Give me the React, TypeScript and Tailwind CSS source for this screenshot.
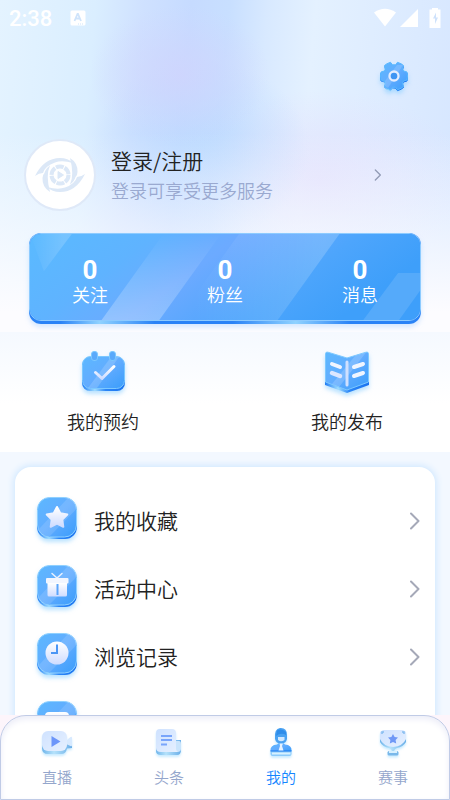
import type { ReactNode } from 'react';

function Defs() {
  return (
    <svg className="absolute h-0 w-0" aria-hidden="true">
      <defs>
        <linearGradient id="blue" x1="0" y1="0" x2="1" y2="1">
          <stop offset="0" stopColor="#5cb8ff" />
          <stop offset="0.5" stopColor="#62acff" />
          <stop offset="1" stopColor="#3a9dfb" />
        </linearGradient>
        <linearGradient id="edge" x1="0" y1="0" x2="1" y2="0">
          <stop offset="0" stopColor="#1f7cf5" />
          <stop offset="0.3" stopColor="#9fdcff" />
          <stop offset="0.55" stopColor="#2b86f7" />
          <stop offset="1" stopColor="#1a73f0" />
        </linearGradient>
        <linearGradient id="white" x1="0" y1="0" x2="0" y2="1">
          <stop offset="0" stopColor="#ffffff" />
          <stop offset="1" stopColor="#cfdcff" />
        </linearGradient>
        <linearGradient id="pale" x1="0" y1="0" x2="1" y2="1">
          <stop offset="0" stopColor="#cfe2ff" />
          <stop offset="1" stopColor="#e6f0ff" />
        </linearGradient>
        <linearGradient id="paleEdge" x1="0" y1="0" x2="1" y2="0">
          <stop offset="0" stopColor="#6fb4ea" />
          <stop offset="0.4" stopColor="#b5e2fb" />
          <stop offset="1" stopColor="#6aaee8" />
        </linearGradient>
        <linearGradient id="shineDown" x1="0" y1="0" x2="0" y2="1">
          <stop offset="0" stopColor="#fff" stopOpacity="0" />
          <stop offset="1" stopColor="#fff" stopOpacity="0.28" />
        </linearGradient>
        <linearGradient id="shineUp" x1="0" y1="0" x2="1" y2="0">
          <stop offset="0.1" stopColor="#fff" stopOpacity="0" />
          <stop offset="0.9" stopColor="#fff" stopOpacity="0.18" />
        </linearGradient>
        <linearGradient id="shineRight" x1="0" y1="0" x2="1" y2="0">
          <stop offset="0" stopColor="#fff" stopOpacity="0" />
          <stop offset="0.8" stopColor="#fff" stopOpacity="0.16" />
        </linearGradient>
        <linearGradient id="cardFill" x1="0" y1="0" x2="1" y2="0.3">
          <stop offset="0" stopColor="#5abaff" />
          <stop offset="0.3" stopColor="#5fb3ff" />
          <stop offset="0.5" stopColor="#6caaff" />
          <stop offset="0.78" stopColor="#4da5fc" />
          <stop offset="1" stopColor="#3e9ffa" />
        </linearGradient>
      </defs>
    </svg>
  );
}

function Tile({ children }: { children?: ReactNode }) {
  return (
    <svg className="h-12 w-12 overflow-visible drop-shadow-[0_3px_2px_rgba(120,200,255,0.5)]" viewBox="0 2 48 48" aria-hidden="true">
      <rect x="4" y="5" width="40" height="39" rx="12" fill="url(#edge)" />
      <rect x="4.500" y="2.500" width="39" height="39.500" rx="12" fill="url(#blue)" stroke="#8fd0ff" />
      <path d="M35 3 Q43 5 43.500 14 L17 41 H14 Q7 40 6 34 Z" fill="#fff" opacity=".12" />
      {children}
    </svg>
  );
}

function StarIcon() {
  return (
    <Tile>
      <path d="M24 12 L27.300 18.300 L34.300 19.500 L29.300 24.600 L30.300 31.800 L24 28.700 L17.700 31.800 L18.700 24.600 L13.700 19.500 L20.700 18.300 Z" fill="url(#white)" stroke="url(#white)" strokeWidth="2" strokeLinejoin="round" />
    </Tile>
  );
}

function GiftIcon() {
  return (
    <Tile>
      <path d="M19 10.500 L24 15 L29 10.500" fill="none" stroke="#e9f1ff" strokeWidth="1.500" strokeLinecap="round" />
      <rect x="13" y="15" width="22.500" height="5.500" rx="1" fill="#f2f6ff" />
      <path d="M14.500 20 H34 V32 Q34 33.500 32.500 33.500 H16 Q14.500 33.500 14.500 32 Z" fill="url(#white)" />
      <path d="M24.500 21 V32" stroke="#5aa5fb" strokeWidth="2" />
    </Tile>
  );
}

function ClockIcon() {
  return (
    <Tile>
      <circle cx="24" cy="22" r="11.500" fill="url(#white)" />
      <path d="M24 13.500 V22 H18" fill="none" stroke="#4b96f5" strokeWidth="2" />
    </Tile>
  );
}

function MessageIcon() {
  return (
    <Tile>
      <rect x="12" y="13" width="24" height="18" rx="4" fill="url(#white)" />
    </Tile>
  );
}

function GearIcon() {
  const gear =
    'M13 -4 L13.500 0 L13 4 L9.500 5 L8.500 7 L9.500 10.500 L7 12.300 L3.500 13.700 L1.500 11.200 H-1.500 L-3.500 13.700 L-7 12.300 L-9.500 10.500 L-8.500 7 L-9.500 5 L-13 4 L-13.500 0 L-13 -4 L-9.500 -5 L-8.500 -7 L-9.500 -10.500 L-7 -12.300 L-3.500 -13.700 L-1.500 -11.200 H1.500 L3.500 -13.700 L7 -12.300 L9.500 -10.500 L8.500 -7 L9.500 -5 Z';
  return (
    <svg className="h-9 w-9 drop-shadow-[0_3px_2px_rgba(120,200,255,0.5)]" viewBox="-18 -18 36 36" strokeLinejoin="round" aria-hidden="true">
      <path d={gear} fill="url(#edge)" stroke="url(#edge)" transform="translate(0 1)" />
      <path d={gear} fill="url(#blue)" stroke="#5ab8ff" />
      <path d="M3 -11 L9 -11 L-6 12 L-9 10 V5 Z" fill="#fff" opacity=".14" />
      <circle r="4.500" fill="#3f95f3" stroke="#e3edff" strokeWidth="2.300" />
    </svg>
  );
}

function CalendarIcon() {
  return (
    <svg className="h-12 w-12 overflow-visible drop-shadow-[0_3px_2px_rgba(120,200,255,0.5)]" viewBox="0 0 48 48" aria-hidden="true">
      <rect x="3" y="10" width="43" height="33" rx="8" fill="url(#edge)" />
      <rect x="3.500" y="8.500" width="42" height="32" rx="8" fill="url(#blue)" stroke="#7cc8ff" />
      <path d="M32 9 H40 L18 40 H9 Z" fill="#fff" opacity=".16" />
      <rect x="12.500" y="3.500" width="6" height="9" rx="2.500" fill="#5aa9fb" stroke="#7cc8ff" />
      <rect x="30.500" y="3.500" width="6" height="9" rx="2.500" fill="#5aa9fb" stroke="#7cc8ff" />
      <path d="M16.500 24.500 L23 30.500 L35 18.500" fill="none" stroke="url(#white)" strokeWidth="3" strokeLinecap="round" strokeLinejoin="round" />
    </svg>
  );
}

function BookIcon() {
  return (
    <svg className="h-12 w-12 overflow-visible drop-shadow-[0_3px_2px_rgba(120,200,255,0.5)]" viewBox="0 0 48 48" aria-hidden="true">
      <path d="M2 7 L24 13 L46 7 V37 L24 45 L2 37 Z" fill="url(#edge)" />
      <path d="M2.500 5.500 Q3 3.500 5 4.200 L24 10 L43 4.200 Q45 3.500 45.500 5.500 V34 L24 42 L2.500 34 Z" fill="url(#blue)" stroke="#7cc8ff" />
      <path d="M32 8 L43 4.500 L16 39 L9 36 Z" fill="#fff" opacity=".16" />
      <path d="M24 14 V37" stroke="#cfe0ff" strokeWidth="3" strokeLinecap="round" />
      <path d="M9 16 L17 19" stroke="#f0f5ff" strokeWidth="4" strokeLinecap="round" />
      <path d="M9 25 L17 28" stroke="#dce6ff" strokeWidth="4.500" strokeLinecap="round" />
      <path d="M31 19 L40 16 M31 28 L40 25" stroke="#f0f5ff" strokeWidth="4" strokeLinecap="round" />
    </svg>
  );
}

function LiveIcon() {
  return (
    <svg className="h-9 w-9 drop-shadow-[0_2px_1px_rgba(150,215,255,0.5)]" viewBox="0 0 36 36" aria-hidden="true">
      <path d="M3 13 V22 Q3 28 9 28 H22 Q27 28 28 22.500 L33 22 V15 L28 14 Z" fill="url(#paleEdge)" />
      <path d="M28 14 L31.500 11 Q33 10 33 12 V19 Q33 21 31.500 20 L27 18 Z" fill="#d8eaff" />
      <rect x="3" y="5" width="25" height="20" rx="6" fill="url(#pale)" />
      <path d="M12.500 10 L21.500 15.500 L12.500 21 Z" fill="#6c96fa" />
    </svg>
  );
}

function NewsIcon() {
  return (
    <svg className="h-9 w-9 drop-shadow-[0_2px_1px_rgba(150,215,255,0.5)]" viewBox="0 0 36 36" aria-hidden="true">
      <path d="M5 14 H30 V24 Q30 29 26 29 H10 Q5 29 5 25 Z" fill="url(#paleEdge)" />
      <path d="M24 15 H28 Q30 15 30 18 V23 Q30 26 26 26 H20 Z" fill="#c9e4fc" />
      <path d="M9 3 H21 Q25 3 25 7 V22 Q25 26 28 26 H10 Q5 26 5 22 V7 Q5 3 9 3 Z" fill="url(#pale)" />
      <path d="M10 10 H21 M10 14 H21 M10 18.500 H16" stroke="#79a5fb" strokeWidth="2" />
    </svg>
  );
}

function MineIcon() {
  return (
    <svg className="h-9 w-9 drop-shadow-[0_2px_1px_rgba(150,215,255,0.5)]" viewBox="0 0 36 36" aria-hidden="true">
      <rect x="7.500" y="23" width="21" height="7" rx="2" fill="#8ccbfb" />
      <path d="M7.500 25 Q7 19 14 18.500 L16 17 H20 L22 18.500 Q29 19 28.500 25 Z" fill="url(#blue)" />
      <path d="M9 27.500 H27.500" stroke="#d7f1ff" strokeWidth="2" />
      <path d="M7.500 25 H28.500" stroke="#1978ee" />
      <path d="M12 13 Q11 2.500 17 2 Q24 1.500 24 9 V13 Q23 17.500 18 17.500 Q13 17.500 12 13 Z" fill="#4aa2f2" />
      <path d="M14 4.500 Q18 2 23 6 V9 Q18 6 13 10 Z" fill="#2f8dea" />
      <path d="M15 11 H21.500 V14 Q18 16.500 15 14 Z" fill="#cfe7ff" />
      <path d="M16.500 17.500 H20 L19 20 L20.500 24.500 H15.500 L17 20 Z" fill="#e6f2ff" />
    </svg>
  );
}

function TrophyIcon() {
  return (
    <svg className="h-9 w-9 drop-shadow-[0_2px_1px_rgba(150,215,255,0.5)]" viewBox="0 0 36 36" aria-hidden="true">
      <path d="M5 9 V16 Q8 21 14 22 Q17 23 17 26 H19 Q19 23 22 22 Q28 21 31 16 V9 Z" fill="url(#paleEdge)" />
      <path d="M8 4 H28 L31 6 V13 Q28 20 18 21 Q8 20 5 13 V6 Z" fill="url(#pale)" />
      <rect x="12.500" y="25" width="11" height="4.500" rx="1.500" fill="#79b8ea" />
      <path d="M14 26 H22" stroke="#d7f0ff" strokeWidth="2" />
      <path d="M18 8 L19.600 11 L23 11.600 L20.600 14 L21.200 17.500 L18 15.900 L14.800 17.500 L15.400 14 L13 11.600 L16.400 11 Z" fill="#6f98f6" />
      <path d="M7 8 V6 H9 M29 8 V6 H27" fill="none" stroke="#86bdf0" strokeWidth="1.500" />
    </svg>
  );
}

function AvatarLogo() {
  const swoosh =
    'M3 25 Q12 7 28 7 Q36 7 41 12 Q30 9 23 11.500 Q13 15 11 22 Q7 22 3 25 Z M12.500 22 Q14 17 18 14.500 Q13.500 24 18 41 Q10 36 10.500 27 Q10.500 24 12.500 22 Z';
  return (
    <svg className="h-12 w-14" viewBox="0 0 56 48" fill="#dce8f7" aria-hidden="true">
      <path d={swoosh} />
      <path d={swoosh} transform="rotate(180 28 24)" />
      <circle cx="28" cy="24" r="8.500" fill="none" stroke="#dce8f7" strokeWidth="4" strokeDasharray="7.900 1" />
      <path d="M26 20.500 L31.500 24 L26 27.500 Z" stroke="#dce8f7" strokeLinejoin="round" />
    </svg>
  );
}

function CardShine() {
  return (
    <svg className="absolute inset-0 h-full w-full" viewBox="0 0 392 88" preserveAspectRatio="none" aria-hidden="true">
      <rect width="392" height="88" fill="url(#cardFill)" />
      <path d="M0 0 H42 L14 38 Z" fill="url(#shineRight)" />
      <path d="M134 0 H192 L130 88 H72 Z" fill="url(#shineDown)" />
      <path d="M210 0 H311 L249 88 H148 Z" fill="url(#shineUp)" />
      <path d="M370 40 H392 V58 L371 88 H335 Z" fill="#fff" opacity=".12" />
    </svg>
  );
}

function Chevron({ className }: { className: string }) {
  return (
    <svg className={className} viewBox="0 0 10 18" fill="none" stroke="currentColor" strokeWidth="2" strokeLinecap="round" strokeLinejoin="round" aria-hidden="true">
      <path d="M1 1.500 L8.500 9 L1 16.500" />
    </svg>
  );
}

const stats = [
  { label: '关注', value: 0 },
  { label: '粉丝', value: 0 },
  { label: '消息', value: 0 },
];

const menu = [
  { label: '我的收藏', icon: <StarIcon /> },
  { label: '活动中心', icon: <GiftIcon /> },
  { label: '浏览记录', icon: <ClockIcon /> },
  { label: '意见反馈', icon: <MessageIcon /> },
];

const tabs = [
  { label: '直播', icon: <LiveIcon /> },
  { label: '头条', icon: <NewsIcon /> },
  { label: '我的', icon: <MineIcon />, active: true },
  { label: '赛事', icon: <TrophyIcon /> },
];

export default function App() {
  return (
    <div className="flex h-screen flex-col overflow-hidden bg-[#f3f8ff] font-['Noto_Sans_CJK_SC',sans-serif] font-[350] text-[#222]">
      <Defs />
      <main className="min-h-0 flex-1 overflow-hidden">
        <header className="bg-[linear-gradient(180deg,rgba(252,252,255,0)_40%,rgba(252,252,255,0.45)_65%,#fcfcff_94%),radial-gradient(ellipse_90px_70px_at_180px_75px,rgba(208,212,253,0.8)_0%,rgba(208,212,253,0)_100%),radial-gradient(ellipse_110px_90px_at_200px_150px,rgba(186,218,255,0.8)_0%,rgba(186,218,255,0)_100%),radial-gradient(ellipse_150px_90px_at_320px_180px,rgba(226,224,253,0.9)_0%,rgba(226,224,253,0)_100%),linear-gradient(95deg,#e4f3ff_0%,#daeeff_20%,#cfe1ff_30%,#c6dbff_40%,#c8dfff_48%,#d8e9ff_56%,#e4f1ff_66%,#d6e6ff_100%)]">
          <div className="flex h-9 items-center px-[9px] text-white">
            <span className="font-[Roboto] text-[22px] font-medium">2:38</span>
            <svg className="ml-[18px] h-4 w-4" viewBox="0 0 16 16" aria-hidden="true">
              <rect x="0.500" y="0.500" width="15" height="15" rx="1.500" fill="#fff" />
              <path d="M4.500 11 L7.500 4 H8 L11 11 M5.500 8.500 H10" fill="none" stroke="#cfe4fb" strokeWidth="1.800" />
              <path d="M8 14 H14" stroke="#cfe4fb" strokeDasharray="1 1" />
            </svg>
            <svg className="ml-auto h-5 w-6" viewBox="0 0 24 20" fill="#fff" aria-hidden="true">
              <path d="M1 4.500 Q12 -3 23 4.500 L12 18.500 Z" />
            </svg>
            <svg className="ml-[3px] h-5 w-5" viewBox="0 0 20 20" fill="#fff" aria-hidden="true">
              <path d="M18 1 V19 H0 Z" />
            </svg>
            <svg className="ml-[9px] h-5 w-3" viewBox="0 0 12 20" aria-hidden="true">
              <path d="M3 0 H9 V1.500 H11.500 V20 H0.500 V1.500 H3 Z" fill="#fff" />
              <path d="M7 4.500 L4 10.500 H6 V16 L9 9.500 H7 Z" fill="#cfe2fb" />
            </svg>
          </div>

          <div className="flex justify-end px-[38px] pt-[22px]">
            <button type="button" aria-label="设置">
              <GearIcon />
            </button>
          </div>

          <button type="button" className="mt-[45px] flex w-full items-center pl-6 pr-[68px] text-left">
            <span className="flex h-[72px] w-[72px] items-center justify-center rounded-full border-2 border-[#dfe9f8] bg-white">
              <AvatarLogo />
            </span>
            <span className="ml-[15px] flex-1">
              <span className="block text-[21px] leading-[30px]">登录/注册</span>
              <span className="block text-[18px] leading-[30px] text-[#9aa9d0]">登录可享受更多服务</span>
            </span>
            <Chevron className="h-3 w-2 text-[#929bb5]" />
          </button>

          <div className="px-[29px] pb-2 pt-[22px]">
            <div className="rounded-xl bg-[linear-gradient(90deg,#2a83f6_0%,#2a83f6_8%,#8fd2ff_18%,#2a83f6_32%,#2a83f6_52%,#8fd2ff_68%,#2a83f6_82%)] pb-[3px] shadow-[0_3px_5px_rgba(150,200,255,0.4)]">
              <div className="relative h-[88px] overflow-hidden rounded-xl border border-[#8dcbff] text-center text-white">
                <CardShine />
                <div className="relative flex justify-between px-[42px] pt-6">
                  {stats.map((s) => (
                    <div key={s.label}>
                      <div className="font-[Roboto] text-[26px] font-bold leading-6">{s.value}</div>
                      <div className="text-[18px] leading-6">{s.label}</div>
                    </div>
                  ))}
                </div>
              </div>
            </div>
          </div>
        </header>

        <section className="flex h-[120px] justify-between bg-linear-to-b from-[#f5f9ff] to-white to-60% px-[67px] pt-4">
          <button type="button" className="flex flex-col items-center">
            <CalendarIcon />
            <span className="mt-[11px] text-[18px] leading-7">我的预约</span>
          </button>
          <button type="button" className="flex flex-col items-center">
            <BookIcon />
            <span className="mt-[11px] text-[18px] leading-7">我的发布</span>
          </button>
        </section>

        <div className="px-[15px] pt-[15px]">
          <ul className="rounded-2xl bg-white pt-[19px] shadow-[0_0_6px_2px_#d3e9ff]">
            {menu.map((m) => (
              <li key={m.label}>
                <button type="button" className="flex h-[68px] w-full items-center pl-[18px] pr-[15px] pt-0.5">
                  {m.icon}
                  <span className="ml-[13px] flex-1 text-left text-[21px]">{m.label}</span>
                  <Chevron className="h-[18px] w-[10px] text-[#a5a9b8]" />
                </button>
              </li>
            ))}
          </ul>
        </div>
      </main>

      <nav className="bg-[#fdf5fb]">
        <div className="grid h-[85px] grid-cols-4 rounded-t-[26px] border border-[#c0cbe6] bg-white shadow-[inset_0_3px_6px_#ecedf8]">
          {tabs.map((t) => (
            <button
              key={t.label}
              type="button"
              className={`flex flex-col items-center pt-2.5 text-[15px] leading-6 ${t.active ? 'text-[#1585ff]' : 'text-[#94a6cc]'}`}
            >
              {t.icon}
              <span className="mt-[3px]">{t.label}</span>
            </button>
          ))}
        </div>
      </nav>
    </div>
  );
}
